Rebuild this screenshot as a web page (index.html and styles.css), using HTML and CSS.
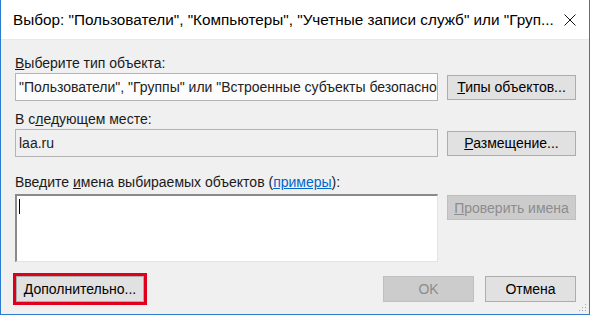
FILE: index.html
```html
<!DOCTYPE html>
<html lang="ru">
<head>
  <meta charset="UTF-8">
  <title>Выбор объектов</title>
  <link rel="stylesheet" href="styles.css">
</head>
<body>
  <div class="window">
    <div class="titlebar">
      <span class="title">Выбор: "Пользователи", "Компьютеры", "Учетные записи служб" или "Груп...</span>
      <svg class="close" width="12" height="12" viewBox="0 0 12 12">
        <path d="M0.5 0.5 L11.5 11.5 M11.5 0.5 L0.5 11.5" stroke="#111" stroke-width="1" fill="none"/>
      </svg>
    </div>
    <div class="content">
      <label class="label first"><u>В</u>ыберите тип объекта:</label>
      <div class="row">
        <div class="textbox readonly">"Пользователи", "Группы" или "Встроенные субъекты безопасно</div>
        <button class="btn side"><u>Т</u>ипы объектов...</button>
      </div>

      <label class="label">В с<u>л</u>едующем месте:</label>
      <div class="row">
        <div class="textbox location">laa.ru</div>
        <button class="btn side"><u>Р</u>азмещение...</button>
      </div>

      <label class="label third">Введите <u>и</u>мена выбираемых объектов (<a href="#" class="link">примеры</a>):</label>
      <div class="row top">
        <div class="textarea"><span class="caret"></span></div>
        <button class="btn side disabled"><u>П</u>роверить имена</button>
      </div>

      <div class="footer">
        <div class="highlight">
          <button class="btn more"><u>Д</u>ополнительно...</button>
        </div>
        <div class="actions">
          <button class="btn action disabled">OK</button>
          <button class="btn action">Отмена</button>
        </div>
      </div>
    </div>
    <svg class="grip" width="8" height="8" viewBox="0 0 8 8">
      <rect x="6" y="0" width="1" height="1" fill="#a6a6a6"/>
      <rect x="3" y="3" width="1" height="1" fill="#a6a6a6"/>
      <rect x="6" y="3" width="1" height="1" fill="#a6a6a6"/>
      <rect x="0" y="6" width="1" height="1" fill="#a6a6a6"/>
      <rect x="3" y="6" width="1" height="1" fill="#a6a6a6"/>
      <rect x="6" y="6" width="1" height="1" fill="#a6a6a6"/>
    </svg>
  </div>
</body>
</html>
```

FILE: styles.css
```css
body {
  margin: 0;
  padding: 0;
  background-color: #ffffff;
  font-family: "Liberation Sans", Arial, sans-serif;
  font-size: 14px;
  color: #000;
}

.window {
  position: relative;
  width: 590px;
  height: 315px;
  box-sizing: border-box;
  border: 1px solid #2b7ccf;
  border-top: none;
  background-color: #f0f0f0;
  display: flex;
  flex-direction: column;
}

.titlebar {
  height: 39px;
  background-color: #fff;
  display: flex;
  align-items: center;
  justify-content: space-between;
  padding: 0 12px 0 12px;
  border-bottom: 1px solid #e9e9e9;
}

.title {
  font-size: 15.3px;
  color: #000;
  white-space: nowrap;
}

.close {
  margin-right: 1px;
}

.content {
  padding: 15px 13px 0 14px;
  display: flex;
  flex-direction: column;
}

.label {
  display: block;
  line-height: 16px;
  height: 16px;
  margin-top: 10px;
  margin-bottom: 2px;
  white-space: nowrap;
  color: #1a1a1a;
}

.label.first {
  margin-top: 0;
}

.label.third {
  margin-top: 17px;
  margin-bottom: 4px;
}

.link {
  color: #0066cc;
}

.row {
  display: flex;
  align-items: center;
  gap: 9px;
}

.row.top {
  align-items: flex-start;
}

.textbox {
  width: 423px;
  height: 28px;
  box-sizing: border-box;
  border: 1px solid #b4b4b4;
  padding: 0 3px;
  line-height: 26px;
  white-space: nowrap;
  overflow: hidden;
  color: #222;
}

.textbox.readonly {
  background-color: #fcfcfc;
}

.textbox.location {
  background-color: #f0f0f0;
}

.textarea {
  width: 423px;
  height: 68px;
  box-sizing: border-box;
  background-color: #fff;
  border-top: 2px solid #8a8a8a;
  border-left: 2px solid #8a8a8a;
  border-right: 1px solid #e3e3e3;
  border-bottom: 1px solid #e3e3e3;
  padding: 3px 2px;
}

.caret {
  display: block;
  width: 1px;
  height: 15px;
  background-color: #000;
}

.btn {
  font-family: inherit;
  font-size: 14px;
  color: #000;
  background-color: #e1e1e1;
  border: 1px solid #adadad;
  padding: 0;
  margin: 0;
  cursor: pointer;
}

.btn.side {
  width: 129px;
  height: 25px;
}

.row.top .btn.side {
  margin-top: 1px;
}

.btn.disabled {
  background-color: #cccccc;
  border-color: #bfbfbf;
  color: #8d8d8d;
}

.footer {
  margin-top: 11px;
  display: flex;
  justify-content: space-between;
  align-items: center;
}

.highlight {
  border: 3px solid #e0001b;
  margin-left: -2px;
  display: flex;
}

.btn.more {
  width: 128px;
  height: 26px;
}

.actions {
  display: flex;
  gap: 11px;
}

.btn.action {
  width: 91px;
  height: 26px;
}

.grip {
  position: absolute;
  right: 2px;
  bottom: 2px;
}
```
